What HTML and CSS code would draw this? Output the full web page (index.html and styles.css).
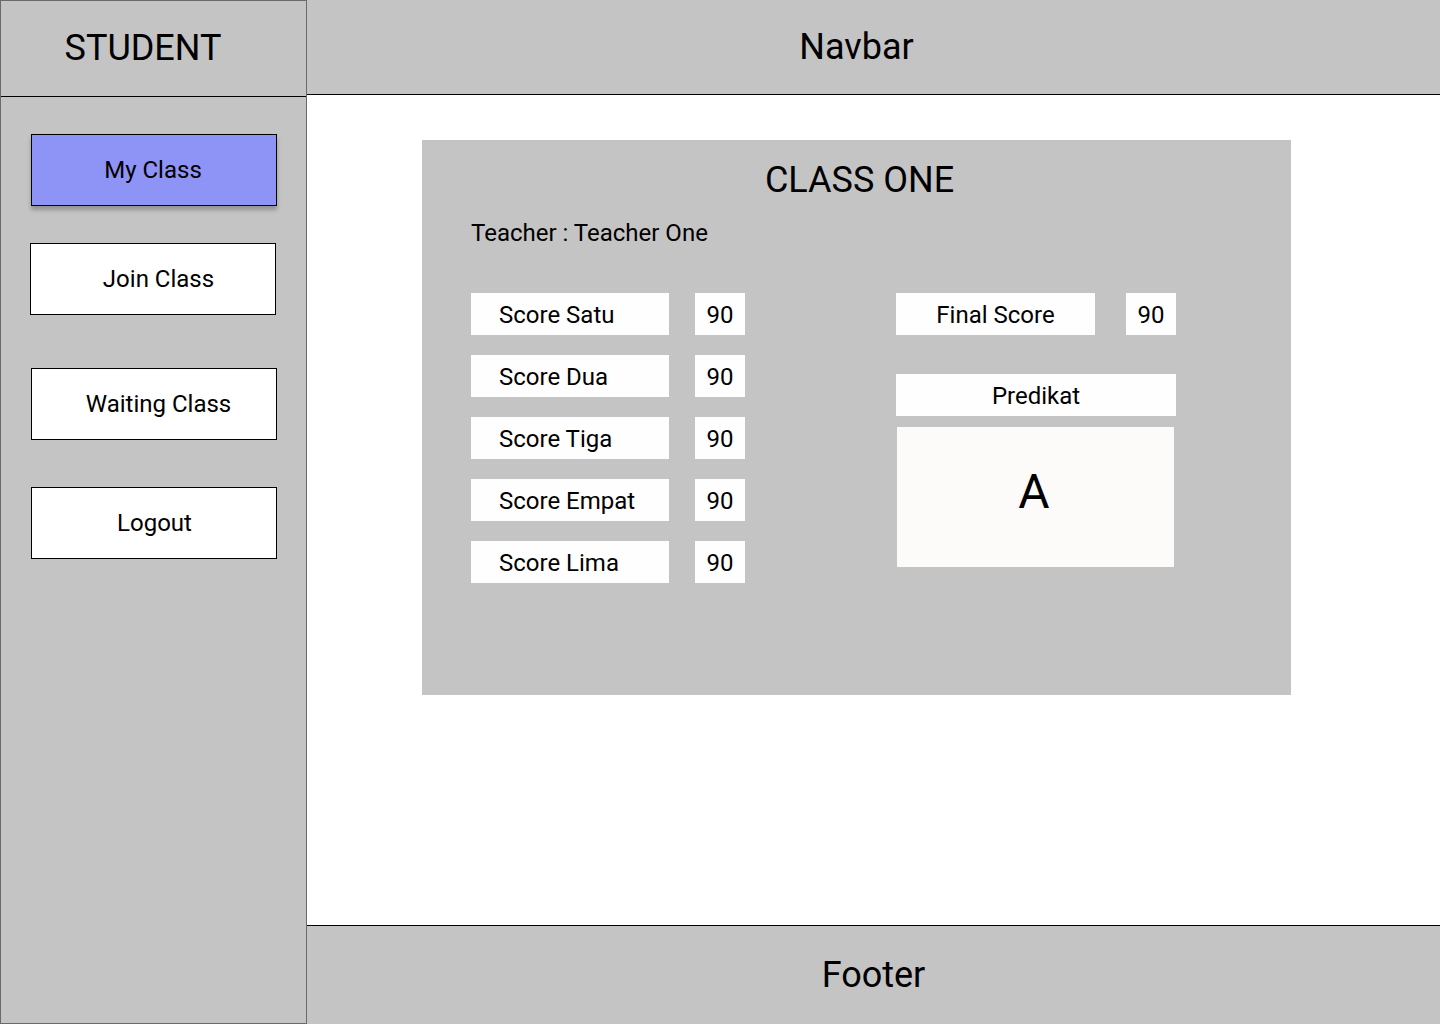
FILE: index.html
```html
<!DOCTYPE html>
<html lang="en">
<head>
<meta charset="utf-8">
<title>Student - My Class</title>
<link rel="stylesheet" href="styles.css">
</head>
<body>
<div class="app">
  <aside class="sidebar">
    <div class="brand">STUDENT</div>
    <nav class="menu">
      <a class="menu-btn menu-btn--active menu-btn--first">My Class</a>
      <a class="menu-btn menu-btn--join">Join Class</a>
      <a class="menu-btn menu-btn--waiting">Waiting Class</a>
      <a class="menu-btn menu-btn--logout">Logout</a>
    </nav>
  </aside>
  <div class="main">
    <header class="navbar">Navbar</header>
    <section class="content">
      <div class="card">
        <h1 class="card-title">CLASS ONE</h1>
        <p class="teacher">Teacher : Teacher One</p>
        <div class="card-body">
          <div class="scores">
            <div class="score-row"><div class="score-label">Score Satu</div><div class="score-value">90</div></div>
            <div class="score-row"><div class="score-label">Score Dua</div><div class="score-value">90</div></div>
            <div class="score-row"><div class="score-label">Score Tiga</div><div class="score-value">90</div></div>
            <div class="score-row"><div class="score-label">Score Empat</div><div class="score-value">90</div></div>
            <div class="score-row"><div class="score-label">Score Lima</div><div class="score-value">90</div></div>
          </div>
          <div class="summary">
            <div class="final-row"><div class="final-label">Final Score</div><div class="final-value">90</div></div>
            <div class="predikat-label">Predikat</div>
            <div class="predikat-value">A</div>
          </div>
        </div>
      </div>
    </section>
    <footer class="footer">Footer</footer>
  </div>
</div>
</body>
</html>
```

FILE: styles.css
```css
* { box-sizing: border-box; }
html, body { margin: 0; padding: 0; }
body {
  font-family: Roboto, "Liberation Sans", Arial, sans-serif;
  color: #000;
  background: #fff;
}
.app {
  display: grid;
  grid-template-columns: 307px 1fr;
  width: 1440px;
  height: 1024px;
}
.sidebar {
  background: #c4c4c4;
  border: 1px solid #6a6a6a;
  height: 1024px;
}
.brand {
  height: 96px;
  border-bottom: 1px solid #000;
  display: flex;
  align-items: center;
  justify-content: center;
  padding: 0 21px 2px 0;
  font-size: 36px;
}
.menu {
  display: flex;
  flex-direction: column;
  align-items: flex-start;
}
.menu-btn {
  display: flex;
  align-items: center;
  justify-content: center;
  width: 246px;
  height: 72px;
  background: #fff;
  border: 1px solid #000;
  font-size: 24px;
  color: #000;
  text-decoration: none;
}
.menu-btn--active {
  background: #8e94f6;
  box-shadow: 0 4px 4px rgba(0, 0, 0, 0.25);
}
.menu-btn--first { margin: 37px 0 0 30px; padding-right: 2px; }
.menu-btn--join { margin: 37px 0 0 29px; padding-left: 11px; }
.menu-btn--waiting { margin: 53px 0 0 30px; padding-left: 9px; }
.menu-btn--logout { margin: 47px 0 0 30px; padding-left: 1px; }

.main {
  display: flex;
  flex-direction: column;
  height: 1024px;
}
.navbar {
  height: 95px;
  background: #c4c4c4;
  border-bottom: 1px solid #000;
  display: flex;
  align-items: center;
  justify-content: center;
  padding-right: 34px;
  font-size: 36px;
}
.content {
  flex: 1;
  padding: 45px 0 0 115px;
}
.footer {
  height: 99px;
  background: #c4c4c4;
  border-top: 1px solid #000;
  display: flex;
  align-items: center;
  justify-content: center;
  font-size: 36px;
}
.card {
  width: 869px;
  height: 555px;
  background: #c4c4c4;
  padding: 19px 0 0 49px;
}
.card-title {
  margin: 0;
  font-size: 36px;
  font-weight: 400;
  text-align: center;
  padding-right: 43px;
}
.teacher {
  margin: 18px 0 0;
  font-size: 24px;
}
.card-body {
  display: flex;
  gap: 151px;
  margin-top: 46px;
}
.scores {
  display: flex;
  flex-direction: column;
  gap: 20px;
}
.score-row {
  display: flex;
  gap: 26px;
}
.score-label, .score-value, .final-label, .final-value, .predikat-label {
  height: 42px;
  background: #fefefe;
  display: flex;
  align-items: center;
  padding-top: 2px;
  font-size: 24px;
}
.score-label {
  width: 198px;
  padding-left: 28px;
}
.score-value, .final-value {
  width: 50px;
  justify-content: center;
}
.summary {
  display: flex;
  flex-direction: column;
  align-items: flex-start;
}
.final-row {
  display: flex;
  gap: 31px;
}
.final-label {
  width: 199px;
  justify-content: center;
}
.predikat-label {
  width: 280px;
  margin-top: 39px;
  justify-content: center;
}
.predikat-value {
  width: 277px;
  height: 140px;
  margin: 11px 0 0 1px;
  background: #fdfafa;
  text-align: center;
  font-size: 48px;
  padding: 36px 3px 0 0;
}
```
